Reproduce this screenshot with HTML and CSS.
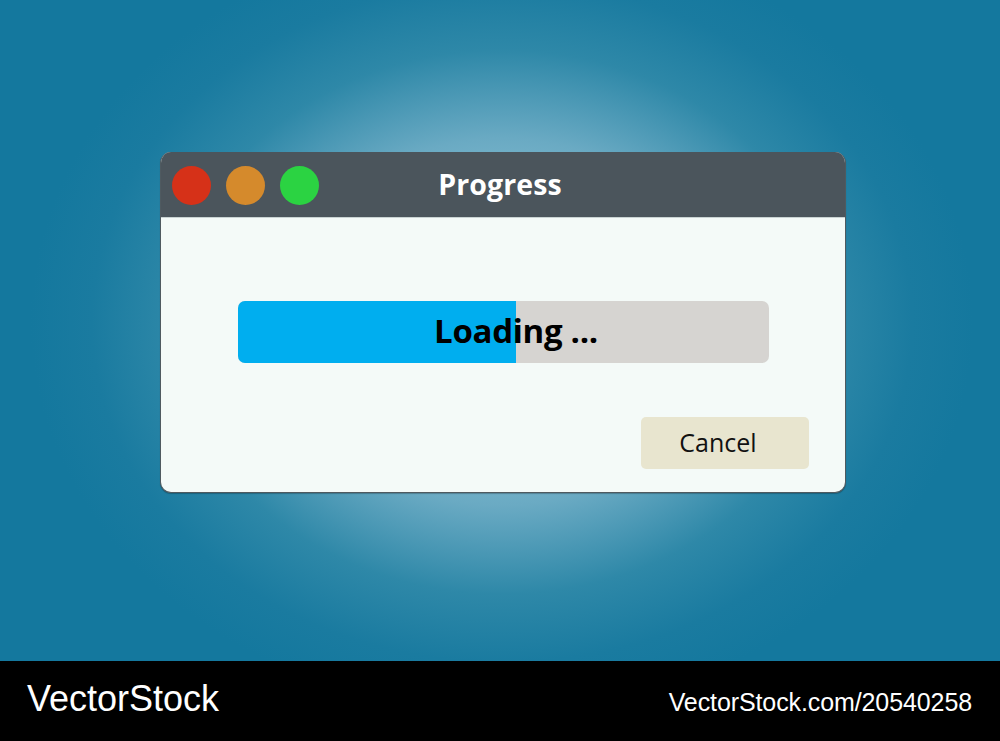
FILE: index.html
```html
<!DOCTYPE html>
<html lang="en">
<head>
<meta charset="utf-8">
<title>Progress</title>
<link rel="stylesheet" href="styles.css">
</head>
<body>
  <main class="stage">
    <section class="window">
      <header class="titlebar">
        <div class="lights">
          <span class="light red"></span>
          <span class="light orange"></span>
          <span class="light green"></span>
        </div>
        <h1 class="title">Progress</h1>
      </header>
      <div class="content">
        <div class="progress">
          <div class="fill" style="width: 52.4%"></div>
          <span class="label">Loading ...</span>
        </div>
        <div class="actions">
          <button class="cancel" type="button">Cancel</button>
        </div>
      </div>
    </section>
  </main>
  <footer class="footer">
    <span class="brand">VectorStock</span>
    <span class="ref">VectorStock.com/20540258</span>
  </footer>
</body>
</html>
```

FILE: styles.css
```css
* { box-sizing: border-box; }

html, body {
  margin: 0;
  width: 1000px;
  height: 741px;
  overflow: hidden;
}

body {
  font-family: "Open Sans", "Noto Sans", sans-serif;
  background: #000;
}

/* blue backdrop with a soft glow behind the dialog */
.stage {
  height: 661px;
  padding: 152px 0 0 160px;
  background:
    radial-gradient(ellipse 410px 340px at 502px 322px,
      #aed7e5 0%, #88c0d4 30%, #6aaac3 54%, #2e88a8 80%, #1a7ba0 100%, #14789e 115%);
  background-color: #14789e;
}

.window {
  width: 686px;
  height: 341px;
  border-radius: 11px;
  overflow: hidden;
  border: 1.5px solid #4f5a60;
  border-top: none;
  background: #f4faf8;
  display: flex;
  flex-direction: column;
  box-shadow: 0 1px 1px rgba(0, 0, 0, 0.25);
}

.titlebar {
  height: 66px;
  background: #4b555c;
  position: relative;
  display: flex;
  align-items: center;
  justify-content: center;
  border-bottom: 1px solid #c9d3d3;
}

.lights {
  position: absolute;
  left: 11px;
  top: 14px;
  display: flex;
  gap: 15px;
}

.light {
  width: 39px;
  height: 39px;
  border-radius: 50%;
}

.red { background: #d63118; }
.orange { background: #d58a2c; }
.green { background: #2bd342; }

.title {
  margin: 0 6px 1px 0;
  color: #fff;
  font-size: 28.5px;
  font-weight: 700;
  letter-spacing: 0.1px;
}

.content {
  flex: 1;
  display: flex;
  flex-direction: column;
  padding: 83px 36px 0 77px;
}

.progress {
  position: relative;
  width: 531px;
  height: 62px;
  border-radius: 7px;
  overflow: hidden;
  background: #d6d4d1;
  display: flex;
  align-items: center;
  justify-content: center;
}

.fill {
  position: absolute;
  left: 0;
  top: 0;
  bottom: 0;
  background: #00aeef;
}

.label {
  position: relative;
  font-size: 33px;
  font-weight: 700;
  color: #000;
  margin: 0 0 3px 25px;
  letter-spacing: -0.3px;
}

.actions {
  display: flex;
  justify-content: flex-end;
  margin-top: 54px;
}

.cancel {
  width: 168px;
  height: 52px;
  border: none;
  border-radius: 5px;
  background: #e8e5cf;
  font-family: "Open Sans", "Noto Sans", sans-serif;
  font-size: 25px;
  color: #111;
  padding: 0 14px 3px 0;
}

.footer {
  height: 80px;
  background: #000;
  color: #fff;
  display: flex;
  align-items: baseline;
  justify-content: space-between;
  padding: 20px 28px 0 27px;
  font-family: "Liberation Sans", Arial, sans-serif;
  line-height: 1;
}

.brand {
  font-size: 36px;
  letter-spacing: 0;
}

.ref {
  font-size: 25px;
  letter-spacing: -0.1px;
}
```
